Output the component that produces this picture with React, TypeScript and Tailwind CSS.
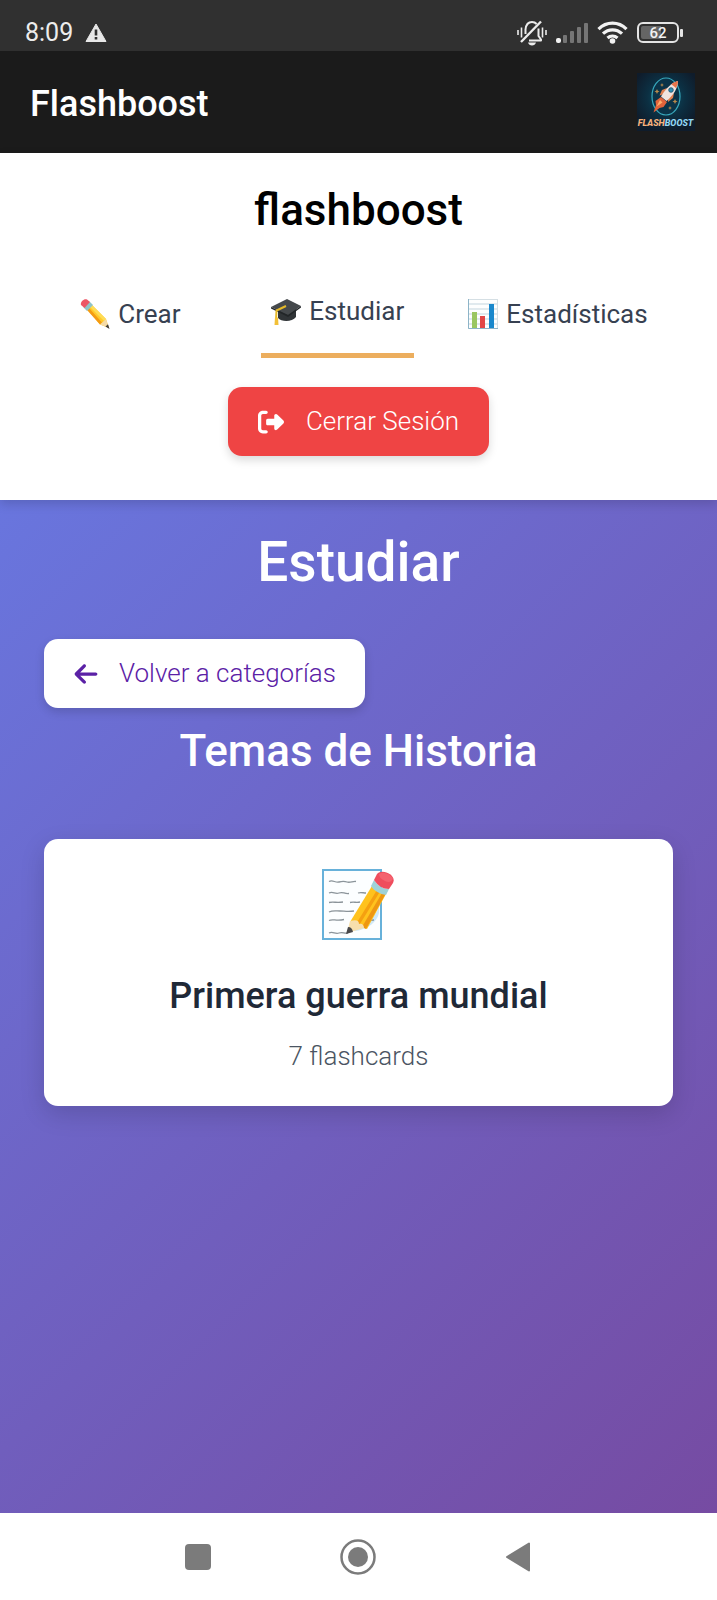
import type { ReactNode } from 'react';
import { FaArrowLeft, FaRightFromBracket } from 'react-icons/fa6';

function WarningIcon() {
    return (
        <svg width="22" height="20" viewBox="0 0 22 20" aria-hidden="true">
            <path d="M11 1 21 18.500H1Z" fill="#e8e8e8" stroke="#e8e8e8" strokeWidth="1" strokeLinejoin="round" />
            <path d="M11 6.500v6M11 14v2.500" stroke="#303030" strokeWidth="2.600" />
        </svg>
    );
}

function BellOffIcon() {
    return (
        <svg width="30" height="26" viewBox="0 0 30 26" fill="none" stroke="#ececec" strokeWidth="2" aria-hidden="true">
            <path d="M1 10v5M4.500 7.500v10M25.500 7.500v10M29 10v5" strokeWidth="1.600" />
            <path d="M8.500 14v-4.500C9 4.500 11.500 2 15 2c2 0 3.500.7 4.600 2M21.500 8.500V16l2.500 3.500V20.500H12" strokeLinejoin="round" />
            <path d="M4 22 24 1.500" strokeWidth="2.400" />
            <path d="M11 22.500h8c-.6 2-2 3-4 3s-3.400-1-4-3Z" fill="#ececec" stroke="none" />
        </svg>
    );
}

function SignalIcon() {
    return (
        <svg width="32" height="22" viewBox="0 0 32 22" aria-hidden="true">
            <rect x="0" y="16" width="5" height="5" rx="2" fill="#f2f2f2" />
            <g fill="#757575">
                <rect x="7" y="13" width="4" height="8" rx="1" />
                <rect x="14" y="9" width="4" height="12" rx="1" />
                <rect x="21" y="5" width="4" height="16" rx="1" />
                <rect x="28" y="1" width="4" height="20" rx="1" />
            </g>
        </svg>
    );
}

function WifiIcon() {
    return (
        <svg width="31" height="23" viewBox="0 0 31 23" fill="none" stroke="#f2f2f2" strokeWidth="3.200" aria-hidden="true">
            <path d="M1.500 8.200C9.500.2 21.500.2 29.500 8.200" />
            <path d="M6 12.700c5.500-5.200 13.500-5.200 19 0" />
            <path d="M10.500 17c3-2.700 7-2.700 10 0" />
            <circle cx="15.500" cy="20" r="2.800" fill="#f2f2f2" stroke="none" />
        </svg>
    );
}

function BatteryIcon() {
    return (
        <svg width="46" height="22" viewBox="0 0 46 22" aria-hidden="true">
            <rect x="1" y="1" width="40" height="19" rx="5" fill="none" stroke="#e4e4e4" strokeWidth="2" />
            <path d="M6 4h18v13H6a2 2 0 0 1-2-2V6a2 2 0 0 1 2-2Z" fill="#656565" />
            <rect x="43" y="7" width="3" height="8" rx="1" fill="#e4e4e4" />
            <text x="21" y="16" textAnchor="middle" fontSize="15" fontWeight="500" fill="#f2f2f2">62</text>
        </svg>
    );
}

function Logo() {
    return (
        <svg width="58" height="58" viewBox="0 0 58 58" role="img" aria-label="Flashboost">
            <defs>
                <radialGradient id="logoSky" cx="50%" cy="42%" r="60%">
                    <stop offset="0" stopColor="#0c5266" />
                    <stop offset="0.550" stopColor="#0c2f42" />
                    <stop offset="1" stopColor="#0f1c2b" />
                </radialGradient>
            </defs>
            <rect width="58" height="58" fill="url(#logoSky)" />
            <ellipse cx="29" cy="23.500" rx="14" ry="18.500" fill="#0b3348" stroke="#38a9bd" strokeWidth="1.200" />
            <path
                d="m20 16 .8 1.700 1.700.8-1.700.8L20 21l-.8-1.700-1.700-.8 1.700-.8ZM38 26l.8 1.700 1.700.8-1.700.8L38 31l-.8-1.700-1.700-.8 1.700-.8ZM25 10l.6 1.400L27 12l-1.400.6L25 14l-.6-1.400L23 12l1.400-.6ZM33 33l.6 1.400L35 35l-1.400.6L33 37l-.6-1.400L31 35l1.400-.6Z"
                fill="#b98b4c"
            />
            <path d="m24 24-5.500 4 .5 4-2.500 7.500 6-4.500 4-1 3.500-5Z" fill="#e2633a" />
            <path d="m23 27-3.500 6.500 6-4Z" fill="#ffac6a" />
            <path d="m30 15-5 2-2.500 5.500 4.500-1.500ZM37 20l-1 5-5 4-.5-4Z" fill="#e08050" />
            <path d="M41 8c-6 1.500-12 7-17 15.500l5.500 4.500C36.500 22 41 15 41 8Z" fill="#f1e4de" />
            <path d="M41 8c-2.300.5-4.600 1.600-6.700 3.200l4.700 3.900c1.300-2.300 2-4.700 2-7.100Z" fill="#e8744a" />
            <circle cx="34" cy="17" r="2.300" fill="#2f91b5" stroke="#1c4a66" strokeWidth="0.800" />
            <text x="28.500" y="52.500" textAnchor="middle" fontSize="9" fontWeight="800" fontStyle="italic">
                <tspan fill="#f9b27c">FLASH</tspan>
                <tspan fill="#96d9f5">BOOST</tspan>
            </text>
        </svg>
    );
}

function PencilIcon() {
    return (
        <svg width="30" height="30" viewBox="0 0 30 30" aria-hidden="true">
            <path d="m7 10 4-5 15 15 3 9-9-3.500Z" fill="#ffc928" />
            <path d="m7 11 13 14.500 2-2L9 9Z" fill="#f49b12" />
            <path d="m11 5 15 15-2 2L9 7Z" fill="#ffdc55" />
            <path d="m20 25.500 6-5.500 3 9Z" fill="#f6dba6" />
            <path d="m25.500 27.500 2.500-2.200L29.500 30Z" fill="#3e3b3a" />
            <path d="m3.500 8.500 6-6L13 6l-6 6Z" fill="#8fc3c8" />
            <path d="M1 6c-1-3 3-7 6-5.500l3 2.500-5.500 6Z" fill="#ed5565" />
        </svg>
    );
}

function GraduationIcon() {
    return (
        <svg width="30" height="28" viewBox="0 0 30 28" aria-hidden="true">
            <path d="M7 12v8c3 4 14 4.500 18-1v-8Z" fill="#303437" />
            <path d="m0 9 16-8 14 7-13 9Z" fill="#45494c" />
            <path d="m0 9 17 8 13-9v1.500L17 19 0 10.500Z" fill="#222628" />
            <path d="M15 8 5.500 12.500 5 22" fill="none" stroke="#e5b929" strokeWidth="2" />
            <path d="M4 19.500h3l.5 7.500h-4Z" fill="#f2c037" />
        </svg>
    );
}

function ChartIcon() {
    return (
        <svg width="30" height="30" viewBox="0 0 30 30" aria-hidden="true">
            <rect x="0.500" y="0.500" width="29" height="29" fill="#fdfefe" stroke="#d5dfe4" />
            <path d="M1 5h28M1 10h28M1 15h28M1 20h28M1 25h28" stroke="#c3d5de" />
            <path d="M.5 0v29.500H30" fill="none" stroke="#8db4c8" />
            <rect x="4" y="13" width="5" height="16" fill="#9ac660" />
            <rect x="12" y="17" width="5" height="12" fill="#e24747" />
            <rect x="21" y="5" width="5" height="24" fill="#1a88cc" />
        </svg>
    );
}

function MemoIcon() {
    return (
        <svg width="74" height="74" viewBox="0 0 74 74" aria-hidden="true">
            <rect x="1" y="2" width="58" height="69" fill="#fcfeff" stroke="#67b1da" strokeWidth="2" />
            <path d="M57 33c1 10-5 17-23 27l-3 3c12 0 24-8 26-18Z" fill="#cfe9f8" />
            <g fill="none" stroke="#8b949a" strokeWidth="1.300">
                <path d="M7 13.500c4-2 6 1.500 10 .5s5-1 8 0 6-1 9-.5" />
                <path d="M7 25c4-2 6 1.500 10 0s5 1 10 .5M36 25c3-1 5 0 8 0" />
                <path d="M7 34.500c4-1 8 .5 14-.5M28 34.500c4-1 6 .5 10-.5" />
                <path d="M7 44c4-2 7-1 11-1s8 1 14 0" />
                <path d="M7 52.500c4-2 7 1 15-1M44 52c3 1 5 0 8 0" />
                <path d="M7 65c4-2 6 1.500 10 0s5 1 9 0" />
            </g>
            <path d="m50 18-22 36 17 7 19-35Z" fill="#ffc21d" />
            <path d="m55 22-21 34 3 1.500 21-34Z" fill="#f5a010" />
            <path d="m60 25-20 34 4 2 20-36Z" fill="#ee9712" />
            <path d="m28 53-3 12 17-5c0-3-2-5-5-4 0-3-2-5-9-3Z" fill="#f7dfac" />
            <path d="m26 59-2 7 7-2c-.5-3-2-5-5-5Z" fill="#49494b" />
            <path d="m49 18 3-6c4 6 9 9 15 9l-3 6c-6-1-12-4-15-9Z" fill="#9fd2d8" />
            <path d="m52 12 3-6c5-6 20 1 16 9l-4 6c-6 0-11-3-15-9Z" fill="#ef4d5d" />
            <path d="M57 6c5-3 10 0 14 4-1 4-4 5-8 3s-6-4-6-7Z" fill="#f4626f" />
        </svg>
    );
}

function NavLink({ icon, label, active = false }: { icon: ReactNode; label: string; active?: boolean }) {
    return (
        <a
            href="#"
            aria-current={active ? 'page' : undefined}
            className={
                active
                    ? 'flex items-center gap-2 border-b-[5px] border-[#ecae5e] px-[10px] pt-1 text-[#374151]'
                    : 'flex items-center justify-center gap-2 px-[10px] pt-1 text-[#374151] first:min-w-[174px]'
            }
        >
            {icon}
            {label}
        </a>
    );
}

export default function App() {
    return (
        <div className="flex min-h-screen flex-col bg-white font-['Roboto',sans-serif]">
            <div className="flex h-[51px] items-center justify-between bg-[#303030] pt-[14px] pr-8 pl-[25px] text-white">
                <div className="flex items-center gap-3">
                    <span className="text-[25px] leading-8 text-[#ececec]">8:09</span>
                    <WarningIcon />
                </div>
                <div className="flex items-center gap-[9px] pr-[2px]">
                    <BellOffIcon />
                    <SignalIcon />
                    <WifiIcon />
                    <BatteryIcon />
                </div>
            </div>

            <div className="flex h-[102px] items-center justify-between bg-[#1b1b1b] pr-[22px] pl-[30px]">
                <span className="pt-1 text-[36px] leading-10 font-medium text-white">Flashboost</span>
                <Logo />
            </div>

            <div className="flex flex-1 flex-col bg-[linear-gradient(135deg,#667eea_0%,#764ba2_100%)]">
                <header className="flex flex-col items-center bg-white px-11 pt-[29px] pb-11 shadow-[0_4px_10px_rgba(0,0,0,0.15)]">
                    <h1 className="text-[44px] leading-[56px] font-medium text-black">flashboost</h1>
                    <nav className="mt-7 flex h-[92px] justify-center gap-11 pr-4 text-[26px]">
                        <NavLink icon={<PencilIcon />} label="Crear" />
                        <NavLink icon={<GraduationIcon />} label="Estudiar" active />
                        <NavLink icon={<ChartIcon />} label="Estadísticas" />
                    </nav>
                    <button className="mt-[29px] flex h-[69px] items-center gap-[22px] rounded-[14px] bg-[#ef4444] px-[30px] text-[26px] font-light text-white shadow-[0_4px_10px_rgba(0,0,0,0.15)]">
                        <FaRightFromBracket />
                        Cerrar Sesión
                    </button>
                </header>

                <main className="flex flex-1 flex-col items-start px-11 pt-[29px]">
                    <h2 className="self-center text-[55px] leading-[66px] font-medium text-white">Estudiar</h2>
                    <button className="mt-11 flex h-[69px] items-center gap-5 rounded-[14px] bg-white px-[29px] text-[26px] font-light text-[#5b21a6] shadow-[0_4px_10px_rgba(0,0,0,0.15)]">
                        <FaArrowLeft />
                        Volver a categorías
                    </button>
                    <h3 className="mt-[15px] self-center text-[44px] leading-[56px] font-medium text-white">Temas de Historia</h3>
                    <a
                        href="#"
                        className="mt-[60px] flex w-full flex-col items-center rounded-[14px] bg-white pt-[29px] pb-[30px] shadow-[0_8px_24px_rgba(0,0,0,0.15)]"
                    >
                        <MemoIcon />
                        <h4 className="mt-8 text-[36px] leading-[44px] font-medium text-[#1f2937]">Primera guerra mundial</h4>
                        <p className="mt-[18px] text-[26px] leading-10 font-light text-[#4b5563]">7 flashcards</p>
                    </a>
                </main>
            </div>

            <div className="grid h-[87px] grid-cols-[1fr_160px_160px_160px_1fr] items-center bg-white pr-[2px]">
                <button aria-label="Recientes" className="col-start-2 flex justify-center">
                    <svg width="26" height="26" viewBox="0 0 26 26">
                        <rect width="26" height="26" rx="4" fill="#7b7b7b" />
                    </svg>
                </button>
                <button aria-label="Inicio" className="flex justify-center">
                    <svg width="36" height="36" viewBox="0 0 36 36">
                        <circle cx="18" cy="18" r="16.500" fill="none" stroke="#7b7b7b" strokeWidth="2.500" />
                        <circle cx="18" cy="18" r="10" fill="#7b7b7b" />
                    </svg>
                </button>
                <button aria-label="Atrás" className="flex justify-center">
                    <svg width="26" height="30" viewBox="0 0 26 30">
                        <path d="M24 1.500v27L2 15Z" fill="#7b7b7b" stroke="#7b7b7b" strokeWidth="2" strokeLinejoin="round" />
                    </svg>
                </button>
            </div>
        </div>
    );
}
